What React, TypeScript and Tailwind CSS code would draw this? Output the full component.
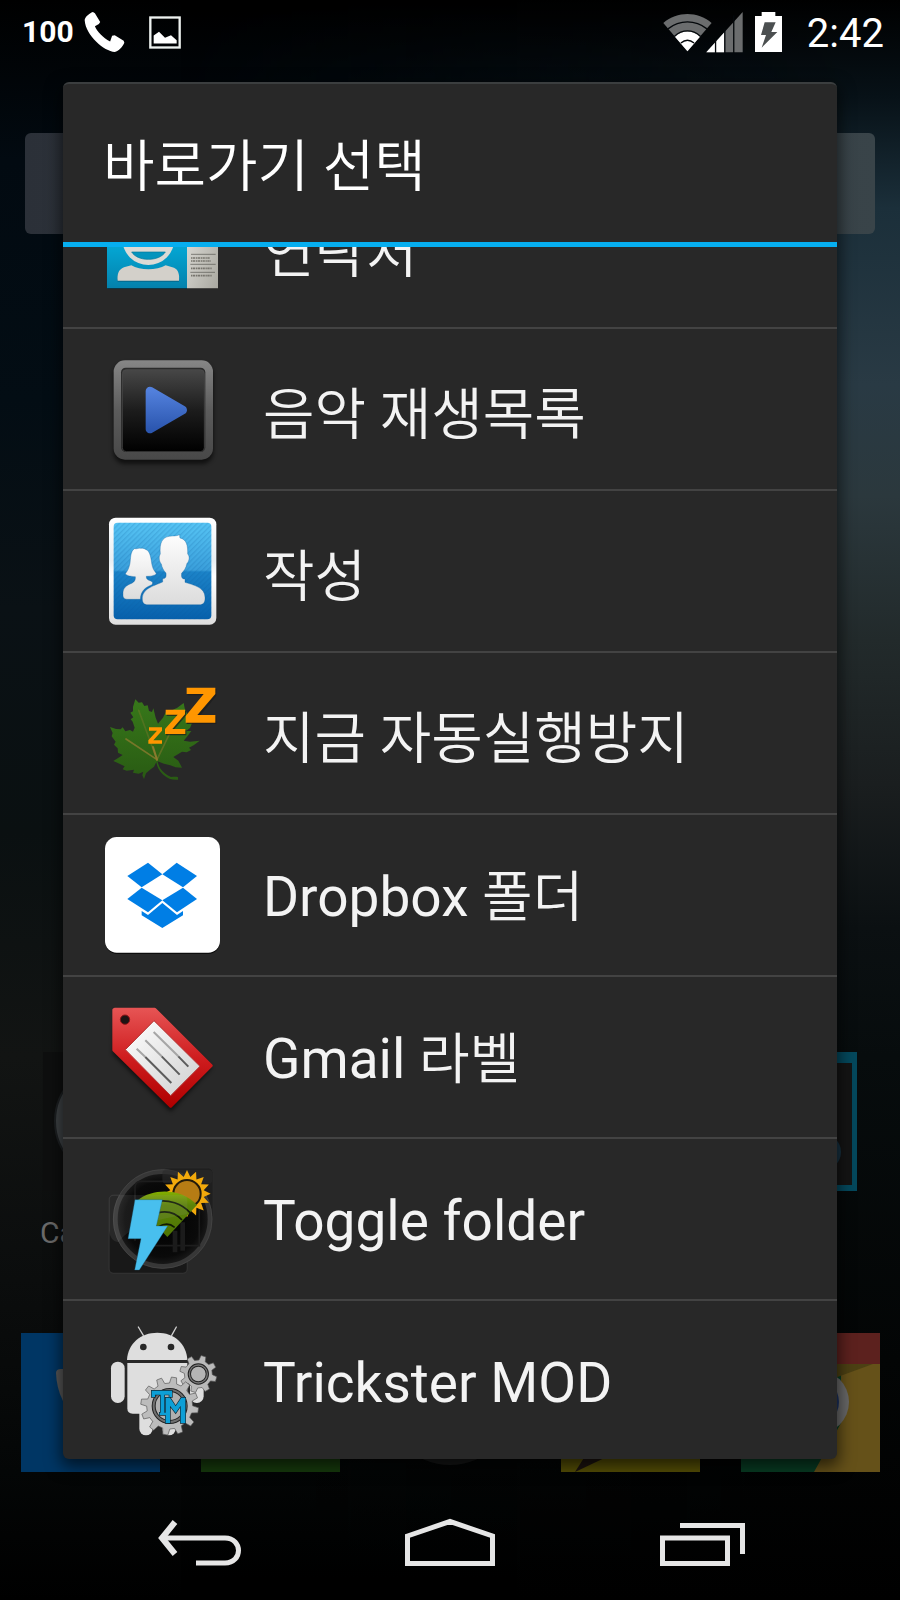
import type { ReactNode } from "react";

const KO = "font-['Roboto','Noto_Sans_CJK_KR',sans-serif]";

/** Outline of a cog wheel with flat-topped teeth. */
function gearPath(cx: number, cy: number, outer: number, inner: number, teeth: number, start = 0): string {
  const step = (Math.PI * 2) / teeth;
  const pts: string[] = [];
  for (let i = 0; i < teeth; i++) {
    const a = start + i * step;
    const corners: [number, number][] = [
      [a - step * 0.3, inner],
      [a - step * 0.17, outer],
      [a + step * 0.17, outer],
      [a + step * 0.3, inner],
    ];
    for (const [t, r] of corners) {
      pts.push(`${(cx + r * Math.cos(t)).toFixed(1)} ${(cy + r * Math.sin(t)).toFixed(1)}`);
    }
  }
  return `M${pts.join("L")}Z`;
}

/** Outline of a sun with pointed rays. */
function sunPath(cx: number, cy: number, outer: number, inner: number, rays: number): string {
  const pts: string[] = [];
  for (let i = 0; i < rays * 2; i++) {
    const r = i % 2 ? inner : outer;
    const t = (Math.PI * i) / rays - Math.PI / 2;
    pts.push(`${(cx + r * Math.cos(t)).toFixed(1)} ${(cy + r * Math.sin(t)).toFixed(1)}`);
  }
  return `M${pts.join("L")}Z`;
}

function Icon({ box, children }: { box: string; children: ReactNode }) {
  return (
    <svg viewBox={box} className="size-[116px] shrink-0 overflow-visible" aria-hidden="true">
      {children}
    </svg>
  );
}

function ContactsIcon() {
  return (
    <Icon box="165 -123 348 348">
      <defs>
        <linearGradient id="ct-b" x1="0" y1="0" x2="0" y2="1">
          <stop offset="0" stopColor="#12b7e4" />
          <stop offset=".55" stopColor="#04a3d0" />
          <stop offset="1" stopColor="#0481ac" />
        </linearGradient>
        <linearGradient id="ct-w" x1="0" y1="0" x2="1" y2="1">
          <stop offset="0" stopColor="#e6e5e0" />
          <stop offset="1" stopColor="#a9a8a0" />
        </linearGradient>
      </defs>
      <rect x="171" y="-80" width="333" height="257" fill="#111" rx="3" />
      <rect x="171" y="-80" width="240" height="255" fill="url(#ct-b)" />
      <rect x="411" y="-80" width="93" height="255" fill="url(#ct-w)" />
      <circle cx="295" cy="27" r="78" fill="#dcdad5" />
      <path d="M245 66H346C337 80 318 88 295 88S254 80 245 66Z" fill="#0594bd" stroke="#04799c" strokeWidth="2" />
      <path d="M203 155C201 138 205 121 222 115L244 108C270 124 320 124 347 108L372 116C386 122 389 138 387 155Z" fill="#04688a" />
      <path d="M203 152C201 135 205 118 222 112L244 106C270 122 320 122 347 106L372 113C386 119 389 135 387 152Z" fill="#d3d0ca" />
      <g stroke="#55544f" strokeWidth="2">
        <path d="M423 73H497M421 103H497M421 127H495" />
      </g>
      <g stroke="#77756e" strokeWidth="5" strokeDasharray="4 1.500 7 2">
        <path d="M423 84H480M423 93H483M423 115H485M423 137H485" />
      </g>
    </Icon>
  );
}

function PlayIcon() {
  return (
    <Icon box="165 363 348 348">
      <defs>
        <linearGradient id="pl-f" x1="0" y1="0" x2="0" y2="1">
          <stop offset="0" stopColor="#868686" />
          <stop offset=".5" stopColor="#5c5c5c" />
          <stop offset="1" stopColor="#484848" />
        </linearGradient>
        <linearGradient id="pl-s" x1="0" y1="0" x2="0" y2="1">
          <stop offset="0" stopColor="#474747" />
          <stop offset=".5" stopColor="#1c1c1c" />
          <stop offset="1" stopColor="#000" />
        </linearGradient>
        <linearGradient id="pl-t" x1="0" y1="0" x2="0" y2="1">
          <stop offset="0" stopColor="#5280dc" />
          <stop offset="1" stopColor="#2c57b0" />
        </linearGradient>
        <filter id="pl-b" x="-20%" y="-20%" width="140%" height="140%">
          <feGaussianBlur stdDeviation="7" />
        </filter>
      </defs>
      <rect x="190" y="400" width="300" height="302" rx="36" fill="#000" opacity=".6" filter="url(#pl-b)" />
      <rect x="191" y="391" width="298" height="298" rx="34" fill="url(#pl-f)" />
      <rect x="213" y="413" width="253" height="253" rx="14" fill="#2b2b2b" />
      <rect x="217" y="419" width="246" height="246" rx="12" fill="url(#pl-s)" stroke="#4e4e4e" strokeWidth="2" />
      <path d="M300 483L398 540L300 597Z" fill="url(#pl-t)" stroke="url(#pl-t)" strokeWidth="26" strokeLinejoin="round" />
    </Icon>
  );
}

function PeopleIcon() {
  return (
    <Icon box="45 39 348 348">
      <defs>
        <linearGradient id="pp-b" x1="0" y1="0" x2="0" y2="1">
          <stop offset="0" stopColor="#56c4f4" />
          <stop offset=".49" stopColor="#3a9fdb" />
          <stop offset=".51" stopColor="#1c83c8" />
          <stop offset="1" stopColor="#0660ac" />
        </linearGradient>
        <linearGradient id="pp-w" x1="0" y1="0" x2="0" y2="1">
          <stop offset="0" stopColor="#fdfdfd" />
          <stop offset="1" stopColor="#dcdcdc" />
        </linearGradient>
        <linearGradient id="pp-f" x1="0" y1="0" x2="0" y2="1">
          <stop offset="0" stopColor="#fff" />
          <stop offset=".4" stopColor="#e8eef2" />
          <stop offset=".55" stopColor="#fff" />
          <stop offset="1" stopColor="#dedede" />
        </linearGradient>
        <pattern id="pp-p" width="11" height="11" patternUnits="userSpaceOnUse" patternTransform="rotate(45)">
          <rect width="4" height="11" fill="#0a5a9c" opacity=".18" />
        </pattern>
      </defs>
      <rect x="57" y="53" width="322" height="321" rx="20" fill="url(#pp-f)" />
      <rect x="71" y="68" width="293" height="290" rx="12" fill="url(#pp-b)" />
      <rect x="71" y="68" width="293" height="290" rx="12" fill="url(#pp-p)" />
      <g stroke="#0d5c9c" strokeOpacity=".5" strokeWidth="2">
        <path
          d="M133 146C140 148 147 143 153 145C160 143 166 148 172 151C184 162 183 185 187 199C190 210 196 216 199 221C193 228 180 229 169 229C168 238 174 240 182 243C190 246 188 250 186 254C168 262 152 270 151 298H114C100 297 99 291 99 284C98 268 104 259 120 252C133 247 137 241 136 230C124 229 112 229 106 221C113 213 117 204 120 190C122 176 121 154 133 146Z"
          fill="url(#pp-w)"
        />
        <path
          d="M211 162C208 130 216 112 238 109C249 107 260 109 269 104C269 108 269 111 270 114C290 118 294 138 293 162C300 168 298 184 291 190C288 204 282 214 275 219C273 232 276 237 285 237V247C310 255 345 262 345 292C346 304 342 313 332 314H170C160 313 156 306 157 292C160 264 196 256 218 246V236C228 236 229 230 228 219C220 211 216 202 214 192C208 186 205 170 211 162Z"
          fill="url(#pp-w)"
        />
      </g>
    </Icon>
  );
}

function LeafIcon() {
  return (
    <Icon box="45 522 348 348">
      <defs>
        <linearGradient id="lf" x1="0" y1="0" x2="0" y2="1">
          <stop offset="0" stopColor="#37781a" />
          <stop offset="1" stopColor="#295b13" />
        </linearGradient>
      </defs>
      <path
        d="M136 595L146 605L156 604L163 615L173 613L177 630L186 633L190 622L197 650L204 668L219 650L228 632L246 628L262 620L281 606L284 622L292 640L290 668L306 666L300 681L288 690L304 690L292 706L281 719L300 722L329 719L312 732L297 740L303 747L290 754L276 752L250 768L265 779L276 800L257 799L241 793L222 788L203 781C205 800 221 819 243 828C252 828 258 826 264 829V836C247 837 233 833 220 821C206 808 201 795 199 783L192 797L180 806L168 817L162 834L157 823L160 812L146 818L129 815L132 806L110 809L98 805L104 796L82 785L70 780L88 769L98 762L84 755L83 742L72 731L77 722L65 706L68 696L60 678L78 684L92 685L98 679L106 691L120 687L129 692L134 680L128 662L122 655L130 649L121 635L129 631V618Z"
        fill="url(#lf)"
      />
      <g stroke="#8a7a2e" fill="none" strokeLinecap="round">
        <path d="M201 776L108 714" strokeWidth="5" opacity=".8" />
        <path d="M201 776L146 628" strokeWidth="5" opacity=".35" />
        <path d="M201 776L266 642" strokeWidth="5" opacity=".5" />
        <path d="M201 776L189 738" strokeWidth="6" />
      </g>
      <g fill="#1c1c1c" transform="translate(3 4)" opacity=".7">
        <path d="M290 560H376V580L326 642H376V665H287V646L339 579H290Z" />
        <path d="M227 626H285V640L247 684H286V699H225V684L263 641H227Z" />
      </g>
      <g fill="#ff9600">
        <path d="M290 560H376V579L322 642H376V665H287V645L341 579H290Z" />
        <path d="M227 626H285V640L247 684H286V699H225V684L263 641H227Z" />
        <path d="M177 679H216V689L190 718H216V728H175V718L201 689H177Z" />
      </g>
    </Icon>
  );
}

function DropboxIcon() {
  return (
    <Icon box="45 48 348 348">
      <rect x="46" y="52" width="344" height="347" rx="35" fill="#0d0d0d" />
      <rect x="45" y="48" width="345" height="347" rx="35" fill="#fff" />
      <g fill="#007ee5">
        <path d="M174 125L217 160L155 199L112 165Z" />
        <path d="M260 125L321 165L279 199L217 160Z" />
        <path d="M155 200L217 238L174 274L112 234Z" />
        <path d="M279 200L321 234L261 274L217 238Z" />
        <path d="M217 246L261 282L279 270V283L217 321L155 283V270L174 282Z" />
      </g>
    </Icon>
  );
}

function TagIcon() {
  return (
    <Icon box="45 534 348 348">
      <defs>
        <linearGradient id="tg-r" x1="0" y1="0" x2="0" y2="1">
          <stop offset="0" stopColor="#e65353" />
          <stop offset=".5" stopColor="#cf1d1f" />
          <stop offset="1" stopColor="#b00000" />
        </linearGradient>
        <linearGradient id="tg-w" x1="0" y1="0" x2="1" y2="1">
          <stop offset="0" stopColor="#fff" />
          <stop offset="1" stopColor="#cfcfcf" />
        </linearGradient>
        <filter id="tg-b" x="-20%" y="-20%" width="140%" height="140%">
          <feGaussianBlur stdDeviation="7" />
        </filter>
      </defs>
      <path d="M74 570H196L366 740L242 872L68 700Z" fill="#000" opacity=".6" filter="url(#tg-b)" />
      <path d="M74 565H194L363 734L242 855L72 687V567Z" fill="url(#tg-r)" stroke="url(#tg-r)" strokeWidth="10" strokeLinejoin="round" />
      <circle cx="105" cy="596" r="14" fill="#1d1414" stroke="#8f1518" strokeWidth="3" />
      <path d="M192 599L330 736L242 824L106 686Z" fill="url(#tg-w)" stroke="#b2302f" strokeWidth="3" />
      <g strokeWidth="6" stroke="#a6a6a6">
        <path d="M191 633L265 706M166 658L215 706M140 683L166 708" />
      </g>
      <g strokeWidth="6" stroke="#5c5c5c">
        <path d="M265 706L295 737M215 706L269 761M166 708L244 786" />
      </g>
    </Icon>
  );
}

function ToggleIcon() {
  return (
    <Icon box="45 31 348 348">
      <defs>
        <linearGradient id="to-g" x1="0" y1="0" x2="0" y2="1">
          <stop offset="0" stopColor="#84b000" />
          <stop offset=".3" stopColor="#5c8209" />
          <stop offset="1" stopColor="#4d7403" />
        </linearGradient>
        <radialGradient id="to-c">
          <stop offset="0" stopColor="#000" />
          <stop offset=".8" stopColor="#0a0a0a" />
          <stop offset="1" stopColor="#1c1c1c" />
        </radialGradient>
      </defs>
      <rect x="216" y="52" width="153" height="156" rx="14" fill="#1f1f1f" stroke="#2e2e2e" strokeWidth="2" />
      <rect x="57" y="133" width="235" height="235" rx="14" fill="#181818" stroke="#303030" strokeWidth="4" />
      <circle cx="218" cy="205" r="142" fill="url(#to-c)" stroke="#373737" strokeWidth="14" />
      <circle cx="218" cy="205" r="148" fill="none" stroke="#484848" strokeWidth="2" />
      <path d="M135 270V110Q135 92 153 92H328V285H160" fill="none" stroke="#1d1d1d" strokeWidth="5" />
      <path d="M255 240V305M278 215V300" fill="none" stroke="#1b1b1b" strokeWidth="14" />
      <rect x="217" y="58" width="150" height="40" rx="10" fill="#2a2a2a" opacity=".6" />
      <path d={sunPath(291, 129, 71, 51, 16)} fill="#f2aa0c" />
      <circle cx="291" cy="129" r="41" fill="#b67c14" stroke="#221a0a" strokeWidth="6" />
      <path d="M144 148C190 112 275 112 321 163L232 259L190 215Z" fill="url(#to-g)" />
      <g fill="none" stroke="#111a05" strokeWidth="5">
        <path d="M200 152C235 146 275 158 300 186M205 186C232 180 258 188 276 208M206 228C222 218 240 218 254 230" />
      </g>
      <path d="M57 147Q57 133 71 133H278Q292 133 292 147V190C220 205 130 215 85 275Q60 270 57 240Z" fill="#999" opacity=".12" />
      <path d="M135 147H217L199 226H233L148 358H134L153 264H114Z" fill="#48bfee" stroke="#1a5f7c" strokeWidth="1" />
    </Icon>
  );
}

function TricksterIcon() {
  return (
    <Icon box="45 516 348 348">
      <g fill="#dedede">
        <path d="M111 627C113 578 152 545 202 545S290 578 292 627Z" />
        <path d="M112 636H292V788H128Q112 788 112 772Z" />
        <rect x="63" y="632" width="41" height="124" rx="20" />
        <rect x="148" y="760" width="40" height="93" rx="20" />
        <rect x="217" y="760" width="40" height="93" rx="20" />
        <rect x="300" y="632" width="41" height="124" rx="20" />
      </g>
      <path d="M145 528L160 553M259 528L245 553" stroke="#cfcfcf" strokeWidth="4" strokeLinecap="round" />
      <circle cx="160" cy="588" r="10" fill="#282828" />
      <circle cx="243" cy="588" r="10" fill="#282828" />
      <path d={gearPath(325, 669, 56, 42, 8, 0.28)} fill="#b9b9b9" stroke="#555" strokeWidth="2" strokeLinejoin="round" />
      <circle cx="325" cy="669" r="27" fill="#b4b4b4" stroke="#222" strokeWidth="10" />
      <circle cx="325" cy="669" r="27" fill="none" stroke="#777" strokeWidth="4" />
      <path d={gearPath(239, 765, 87, 69, 12, 0.15)} fill="#bcbcbc" stroke="#555" strokeWidth="2" strokeLinejoin="round" />
      <circle cx="239" cy="765" r="48" fill="#b0b0b0" stroke="#222" strokeWidth="12" />
      <circle cx="239" cy="765" r="48" fill="none" stroke="#6f6f6f" strokeWidth="6" />
      <path
        d="M185 719H246V738H238V731H223V785H229V792H209V785H212V731H195V738H185Z M227 740H240L257 766L274 740H286V816H272V764L257 786L240 764V816H227Z"
        fill="#0d9fd6"
        stroke="#122a36"
        strokeWidth="4"
        paintOrder="stroke"
      />
    </Icon>
  );
}

// Hangul-only labels are set slightly larger than those with Latin letters.
const HANGUL = "pt-3 text-[56px]";
const MIXED = "pt-1 text-[55px]";

const items: { latin?: string; hangul?: string; icon: ReactNode; type: string }[] = [
  { hangul: "연락처", icon: <ContactsIcon />, type: HANGUL },
  { hangul: "음악 재생목록", icon: <PlayIcon />, type: HANGUL },
  { hangul: "작성", icon: <PeopleIcon />, type: HANGUL },
  { hangul: "지금 자동실행방지", icon: <LeafIcon />, type: HANGUL },
  { latin: "Dropbox ", hangul: "폴더", icon: <DropboxIcon />, type: MIXED },
  { latin: "Gmail ", hangul: "라벨", icon: <TagIcon />, type: MIXED },
  { latin: "Toggle folder", icon: <ToggleIcon />, type: MIXED },
  { latin: "Trickster MOD", icon: <TricksterIcon />, type: MIXED },
];

function StatusBar() {
  return (
    <header className="flex h-16 items-center justify-between pr-4 pl-[22px] text-white">
      <div className="flex items-center">
        <span className="w-[62px] font-['Liberation_Sans_Narrow','Roboto',sans-serif] text-[30px] leading-none font-bold">100</span>
        <svg viewBox="0 0 122 124" className="h-[41px] w-[41px]" aria-label="Call">
          <path d="M26 0L32 4L48 30L44 36L32 43C38 58 56 78 78 89L84 72L92 70L119 87L121 93C116 106 104 118 92 121C60 118 4 72 1 24C2 16 14 4 26 0Z" fill="#fff" />
        </svg>
        <svg viewBox="0 0 96 98" className="ml-6 h-[33px] w-8" aria-label="Screenshot saved">
          <rect x="4" y="4" width="88" height="90" fill="none" stroke="#eef2f0" strokeWidth="7" />
          <path d="M14 82V58L30 47L48 65L66 57L83 72V82Z" fill="#fff" />
        </svg>
      </div>
      <div className="flex items-center">
        <svg viewBox="0 0 240 124" className="h-[41px] w-20" aria-label="Wi-Fi and mobile signal">
          <path d="M0 33C42 -3 104 -3 146 33L73 119Z" fill="#6b6d6e" />
          <path d="M35 75C58 54 88 54 111 75L73 119Z" fill="#fff" />
          <g fill="none" stroke="#04080b" strokeWidth="4">
            <path d="M14 51C50 23 96 23 132 51M34 73C58 52 88 52 112 73M53 94C66 83 80 83 93 94" />
          </g>
          <path d="M130 122L240 0V122Z" fill="#6b6d6e" />
          <path d="M130 122L184 62V122Z" fill="#fff" />
          <path d="M158 80V124M186 50V124M213 10V124" stroke="#04080b" strokeWidth="4" />
        </svg>
        <svg viewBox="0 0 81 120" className="ml-3 h-10 w-[27px]" aria-label="Battery charging">
          <path d="M20 0H61V12H81V120H0V12H20Z" fill="#fff" />
          <path d="M29 31H62L49 60H67L20 107L33 69H18Z" fill="#4b4f50" />
        </svg>
        <time className="ml-[25px] pt-1 font-['Roboto',sans-serif] text-[40px] leading-none">2:42</time>
      </div>
    </header>
  );
}

function HomeScreen() {
  return (
    <>
      <div className="mx-[25px] mt-[69px] h-[101px] rounded-md bg-linear-to-r from-[#2b3038] to-[#394449]" />
      <div className="grid flex-1 grid-cols-4 content-end pb-20">
        <div className="flex flex-col items-center gap-[22px]">
          <svg viewBox="0 0 139 139" className="size-[139px]" aria-hidden="true">
            <rect width="139" height="139" fill="#0e0f0f" />
            <circle cx="69" cy="69" r="57" fill="#3e4245" stroke="#1d2022" strokeWidth="2" />
          </svg>
          <span className="self-start pl-10 font-['Roboto',sans-serif] text-[30px] leading-10 text-[#6a6a6a]">Camera</span>
        </div>
        <div className="col-start-4 flex flex-col items-center">
          <svg viewBox="0 0 139 139" className="size-[139px]" aria-hidden="true">
            <rect width="139" height="139" fill="#04485c" />
            <rect x="6" y="11" width="128" height="122" fill="#141414" />
            <circle cx="105" cy="100" r="18" fill="#173140" />
          </svg>
        </div>
      </div>
      <div className="grid grid-cols-5 justify-items-center pb-3">
        <svg viewBox="0 0 139 139" className="size-[139px]" aria-hidden="true">
          <rect width="139" height="139" fill="#003664" />
          <path d="M35 40Q35 36 40 36H60V90Q36 70 35 40Z" fill="#565656" />
        </svg>
        <div className="size-[139px] bg-[#173c0d]" />
        <div className="size-[132px] rounded-full bg-[#161717]" />
        <svg viewBox="0 0 139 139" className="size-[139px]" aria-hidden="true">
          <rect width="139" height="139" fill="#575005" />
          <path d="M14 139L26 120H54Z" fill="#1d1410" />
        </svg>
        <svg viewBox="0 0 139 139" className="size-[139px]" aria-hidden="true">
          <rect width="139" height="139" fill="#083d24" />
          <path d="M73 139L100 90V31H139V139Z" fill="#655119" />
          <rect width="139" height="31" fill="#5c211e" />
          <path d="M80 31H132L80 50Z" fill="#4c4013" />
          <circle cx="76" cy="69" r="32" fill="#686868" />
          <circle cx="73" cy="69" r="25" fill="#1c3260" />
        </svg>
      </div>
    </>
  );
}

function NavBar() {
  const button = "flex h-[116px] items-center justify-center";
  return (
    <nav className="grid grid-cols-3 px-[75px]">
      <button type="button" aria-label="Back" className={button}>
        <svg viewBox="0 0 90 48" className="h-12 w-[90px]" fill="none" stroke="#e6e6e6" strokeWidth="5">
          <path d="M7 20H70C88 20 88 45 70 45H41" />
          <path d="M20 4L7 20L20 36" strokeWidth="6" />
        </svg>
      </button>
      <button type="button" aria-label="Home" className={button}>
        <svg viewBox="0 0 90 48" className="h-12 w-[90px]" fill="none" stroke="#e6e6e6" strokeWidth="5">
          <path d="M2.500 18L45 3.500L87.500 18V45.500H2.500Z" />
        </svg>
      </button>
      <button type="button" aria-label="Recent apps" className={button}>
        <svg viewBox="0 0 90 48" className="h-12 w-[90px]" fill="none" stroke="#e6e6e6" strokeWidth="5">
          <rect x="7.500" y="20" width="65" height="25.500" />
          <path d="M25 7.500H87.500V36" />
        </svg>
      </button>
    </nav>
  );
}

function ShortcutDialog() {
  return (
    <section
      role="dialog"
      aria-labelledby="dialog-title"
      className="absolute inset-x-[63px] top-[82px] bottom-[141px] flex flex-col overflow-hidden rounded-md border-t-2 border-[#3b3e3f] bg-[#282828] shadow-[0_6px_16px_2px_rgba(0,0,0,0.6)]"
    >
      <h1 id="dialog-title" className={`${KO} flex h-[158px] shrink-0 items-center pt-2 pl-10 text-[56px] leading-none font-[350] text-white`}>
        바로가기 선택
      </h1>
      <div className="h-[5px] shrink-0 bg-[#06aeef]" />
      <ul className="min-h-0 flex-1 overflow-hidden">
        {items.map(({ latin, hangul, icon, type }) => (
          <li key={`${latin}${hangul}`} className="border-b-2 border-[#434343] first:-mt-20 last:border-b-0">
            <button type="button" className={`${KO} flex h-40 w-full items-center gap-[42px] pl-[42px] text-left leading-none text-[#f3f3f3]`}>
              {icon}
              <span className={`leading-none ${type}`}>
                {latin}
                {hangul && <span className="font-[350]">{hangul}</span>}
              </span>
            </button>
          </li>
        ))}
      </ul>
    </section>
  );
}

export default function App() {
  return (
    <main className="relative isolate flex min-h-screen flex-col overflow-hidden bg-[linear-gradient(to_bottom,#000_0%,#020a11_10%,#030d14_25%,#0a1115_38%,#0a1011_52%,#121413_66%,#0b0d0d_80%,#040606_92%,#000_100%)]">
      <div className="absolute inset-0 -z-10 bg-[linear-gradient(to_bottom,#000_0%,#071117_6%,#1b2f3a_13%,#293a44_24%,#2b383d_31%,#222a2b_40%,#1a1e1f_49%,#0b1012_58%,#070c0d_66%,#030505_85%,#000_100%)] mask-[linear-gradient(to_right,transparent_20%,black_95%)]" />
      <StatusBar />
      <HomeScreen />
      <NavBar />
      <ShortcutDialog />
    </main>
  );
}
